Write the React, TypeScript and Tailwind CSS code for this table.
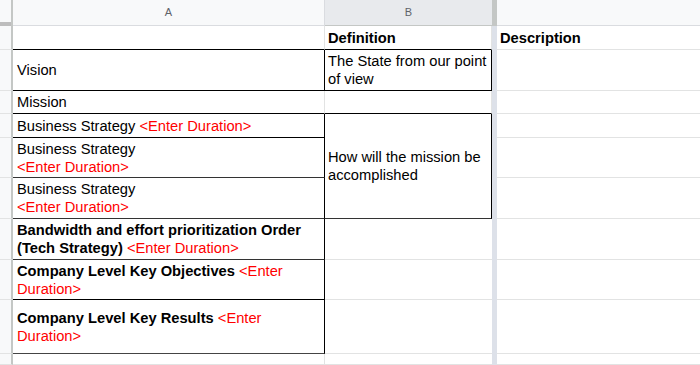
import { ReactNode } from 'react';

const font = { fontFamily: '"Liberation Sans", Arial, sans-serif' };

const Red = ({ children }: { children: ReactNode }) => (
  <span className="font-normal text-[#ff0000]">{children}</span>
);

interface CellProps {
  children?: ReactNode;
  className?: string;
  colA?: boolean;
}

// plain sheet cell: text left, vertically centred, gridline on bottom and right
const Cell = ({ children, className = '', colA }: CellProps) => (
  <div
    className={`flex items-center overflow-hidden border-b border-r pr-[2px] text-[14.7px] leading-[18px] text-black ${colA ? 'pl-[4px]' : 'pl-[3px]'} ${className}`}
  >
    <div>{children}</div>
  </div>
);

const RowHead = () => <div className="border-b border-r-2 border-b-[#e2e3e3] border-r-[#c4c7c5] bg-[#f8f9fa]" />;
const Divider = () => <div className="bg-[#dde1e9]" />;
const C = () => <div className="border-b border-[#e2e3e3]" />;

export default function App() {
  return (
    <div
      style={font}
      className="grid h-[365px] w-[700px] overflow-hidden bg-white grid-cols-[13px_312px_167px_5px_1fr] grid-rows-[26px_24px_41px_23px_24px_40px_41px_41px_40px_54px_1fr]"
    >
      {/* column headers */}
      <div className="flex flex-col border-r-2 border-[#c4c7c5] bg-[#f8f9fa]">
        <div className="flex-1" />
        <div className="h-[4px] bg-[#bdbdbd]" />
      </div>
      <div className="flex items-center justify-center border-b border-r border-[#dadce0] bg-[#f8f9fa] text-[11px] text-[#5f6368]">A</div>
      <div className="flex items-center justify-center border-b border-[#c4c7c5] bg-[#e8eaed] text-[11px] text-[#5f6368]">B</div>
      <div className="bg-[#c4c7c5]" />
      <div className="border-b border-[#dadce0] bg-[#f8f9fa]" />

      {/* row 1 */}
      <RowHead />
      <Cell colA className="border-b-black border-r-[#e2e3e3]" />
      <Cell className="border-b-black border-r-[#e2e3e3] font-bold">Definition</Cell>
      <Divider />
      <Cell className="border-b-[#e2e3e3] border-r-0 font-bold">Description</Cell>

      {/* Vision */}
      <RowHead />
      <Cell colA className="border-b-black border-r-black">Vision</Cell>
      <Cell className="border-b-black border-r-black">The State from our point of view</Cell>
      <Divider />
      <C />

      {/* Mission */}
      <RowHead />
      <Cell colA className="border-b-black border-r-[#e2e3e3]">Mission</Cell>
      <Cell className="border-b-black border-r-[#e2e3e3]" />
      <Divider />
      <C />

      {/* Business strategy x3 + merged definition */}
      <RowHead />
      <Cell colA className="border-b-black border-r-black">
        Business Strategy <Red>&lt;Enter Duration&gt;</Red>
      </Cell>
      <Cell className="row-span-3 border-b-[#333] border-r-black">How will the mission be accomplished</Cell>
      <Divider />
      <C />

      <RowHead />
      <Cell colA className="border-b-[#333] border-r-black">
        Business Strategy
        <br />
        <Red>&lt;Enter Duration&gt;</Red>
      </Cell>
      <Divider />
      <C />

      <RowHead />
      <Cell colA className="border-b-[#333] border-r-black">
        Business Strategy
        <br />
        <Red>&lt;Enter Duration&gt;</Red>
      </Cell>
      <Divider />
      <C />

      {/* bandwidth */}
      <RowHead />
      <Cell colA className="border-b-[#333] border-r-black font-bold">
        Bandwidth and effort prioritization Order (Tech Strategy) <Red>&lt;Enter Duration&gt;</Red>
      </Cell>
      <Cell className="border-b-[#e2e3e3] border-r-0" />
      <Divider />
      <C />

      {/* objectives */}
      <RowHead />
      <Cell colA className="border-b-black border-r-black font-bold">
        Company Level Key Objectives <Red>&lt;Enter Duration&gt;</Red>
      </Cell>
      <Cell className="border-b-[#e2e3e3] border-r-0" />
      <Divider />
      <C />

      {/* key results */}
      <RowHead />
      <Cell colA className="border-b-[#444] border-r-black font-bold">
        Company Level Key Results <Red>&lt;Enter Duration&gt;</Red>
      </Cell>
      <Cell className="border-b-[#e2e3e3] border-r-0" />
      <Divider />
      <C />

      {/* trailing partial row */}
      <RowHead />
      <Cell colA className="border-b-[#e2e3e3] border-r-[#e2e3e3]" />
      <Cell className="border-b-[#e2e3e3] border-r-0" />
      <Divider />
      <C />
    </div>
  );
}
